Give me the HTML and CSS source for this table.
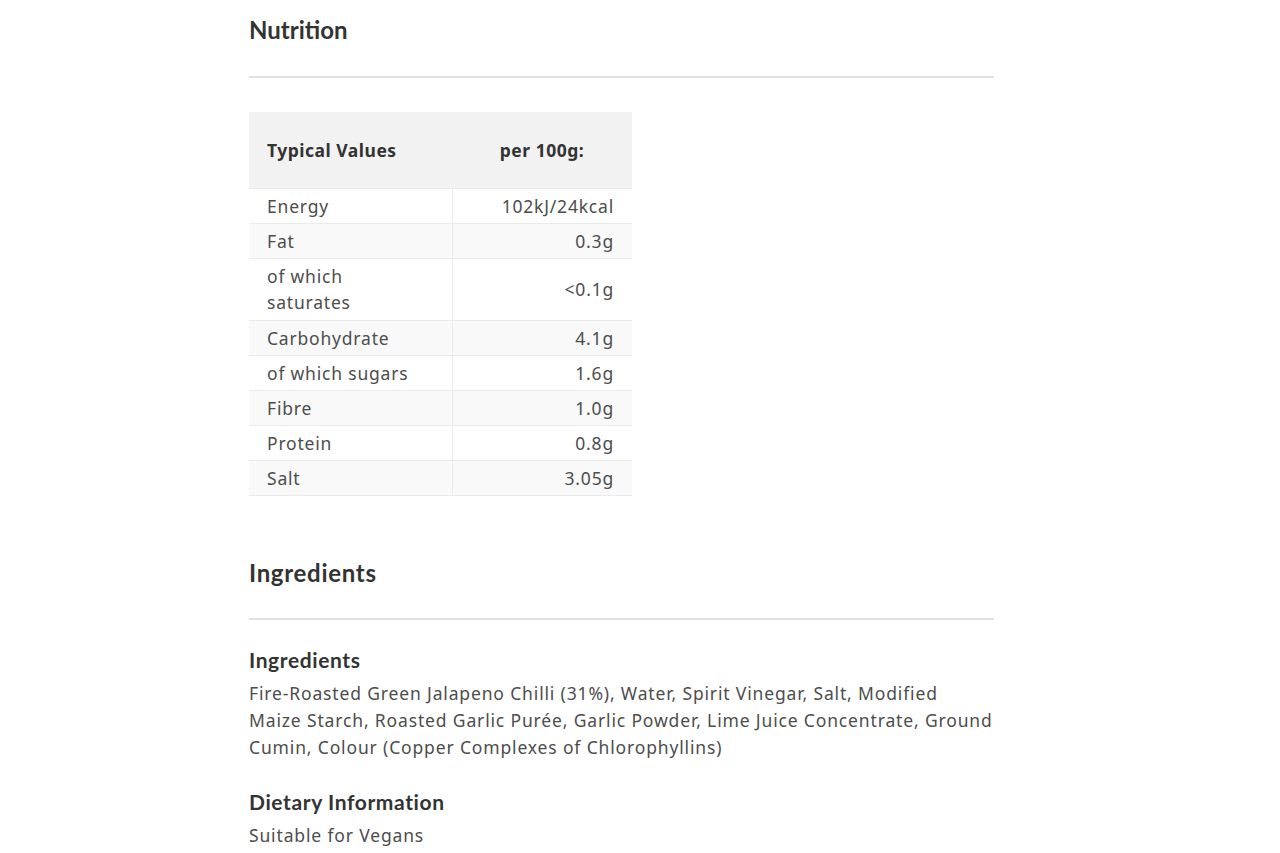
FILE: index.html
```html
<!DOCTYPE html>
<html lang="en">
<head>
<meta charset="utf-8">
<title>Nutrition</title>
<link rel="stylesheet" href="styles.css">
</head>
<body>
<main class="content">
  <section class="section">
    <h2 class="section-title">Nutrition</h2>
    <hr class="rule">
    <table class="nutrition">
      <thead>
        <tr><th class="label-head">Typical Values</th><th class="value-head">per 100g:</th></tr>
      </thead>
      <tbody>
        <tr><td>Energy</td><td class="val">102kJ/24kcal</td></tr>
        <tr><td>Fat</td><td class="val">0.3g</td></tr>
        <tr><td class="wrap">of which<br>saturates</td><td class="val">&lt;0.1g</td></tr>
        <tr><td>Carbohydrate</td><td class="val">4.1g</td></tr>
        <tr><td>of which sugars</td><td class="val">1.6g</td></tr>
        <tr><td>Fibre</td><td class="val">1.0g</td></tr>
        <tr><td>Protein</td><td class="val">0.8g</td></tr>
        <tr><td>Salt</td><td class="val">3.05g</td></tr>
      </tbody>
    </table>
  </section>
  <section class="section second">
    <h2 class="section-title wide">Ingredients</h2>
    <hr class="rule">
    <h3 class="sub-title first-sub">Ingredients</h3>
    <p class="text">Fire-Roasted Green Jalapeno Chilli (31%), Water, Spirit Vinegar, Salt, Modified Maize Starch, Roasted Garlic Purée, Garlic Powder, Lime Juice Concentrate, Ground Cumin, Colour (Copper Complexes of Chlorophyllins)</p>
    <h3 class="sub-title">Dietary Information</h3>
    <p class="text">Suitable for Vegans</p>
  </section>
</main>
</body>
</html>
```
FILE: styles.css
```css
html, body {
  margin: 0;
  padding: 0;
  background: #fff;
}
body {
  font-family: "Noto Sans", "Open Sans", sans-serif;
  color: #4d4d4d;
}
.content {
  width: 745px;
  margin-left: 249px;
}
.section-title {
  font-family: Lato, sans-serif;
  font-weight: 700;
  font-size: 24px;
  color: #333;
  margin: 0;
  padding-top: 15px;
  line-height: 30px;
}
.section-title.wide {
  letter-spacing: 0.7px;
}
.rule {
  border: 0;
  height: 2px;
  background: #e2e2e2;
  margin: 31px 0 0 0;
}
.second .rule {
  margin-top: 30px;
}
.nutrition {
  margin-top: 34px;
  border-collapse: collapse;
  width: 383px;
  font-size: 17.5px;
  letter-spacing: 0.8px;
}
.nutrition th {
  background: #f2f2f2;
  height: 76px;
  padding: 0 18px;
  font-weight: 700;
  color: #333;
  font-size: 17.5px;
  letter-spacing: 0.5px;
}
.label-head { text-align: left; width: 167px; }
.value-head { text-align: center; }
.nutrition td {
  height: 33px;
  padding: 0 18px 1px;
  border-top: 1px solid #ebebeb;
  line-height: 26px;
  color: #4d4d4d;
}
.nutrition td:first-child {
  border-right: 1px solid #ebebeb;
}
.nutrition tbody tr:nth-child(even) td {
  background: #f9f9f9;
}
.nutrition tbody tr:last-child td {
  border-bottom: 1px solid #ebebeb;
}
.nutrition td.wrap {
  height: 60px;
}
.nutrition td.val {
  text-align: right;
}
.second {
  margin-top: 62px;
}
.second .section-title { padding-top: 0; }
.sub-title {
  font-family: Lato, sans-serif;
  font-weight: 700;
  font-size: 21px;
  letter-spacing: 0.6px;
  color: #333;
  margin: 28px 0 0 0;
  line-height: 26px;
}
.sub-title.first-sub { margin-top: 27px; }
.sub-title + .text { margin-top: 7px; }
.text {
  margin: 0;
  font-size: 17.5px;
  letter-spacing: 0.85px;
  line-height: 27px;
  color: #4d4d4d;
}
```
